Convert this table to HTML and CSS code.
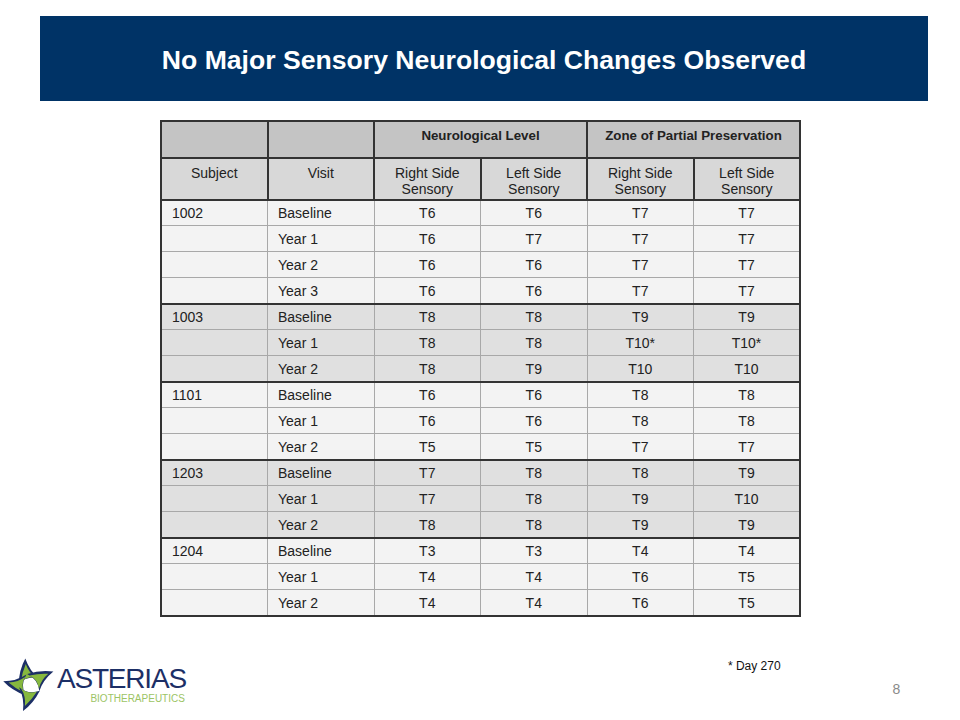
FILE: index.html
```html
<!DOCTYPE html>
<html>
<head>
<meta charset="utf-8">
<link rel="stylesheet" href="styles.css">
</head>
<body>
<div class="slide">
  <div class="banner"><h1 class="title">No Major Sensory Neurological Changes Observed</h1></div>
  <table class="grid">
    <colgroup><col><col><col><col><col><col></colgroup>
    <thead>
      <tr class="top">
        <th></th><th></th>
        <th colspan="2">Neurological Level</th>
        <th colspan="2">Zone of Partial Preservation</th>
      </tr>
      <tr class="sub">
        <th>Subject</th><th>Visit</th>
        <th>Right Side<br>Sensory</th><th>Left Side<br>Sensory</th>
        <th>Right Side<br>Sensory</th><th>Left Side<br>Sensory</th>
      </tr>
    </thead>
    <tbody class="ga">
      <tr class="start"><td class="l">1002</td><td class="l">Baseline</td><td>T6</td><td>T6</td><td>T7</td><td>T7</td></tr>
      <tr><td class="l"></td><td class="l">Year 1</td><td>T6</td><td>T7</td><td>T7</td><td>T7</td></tr>
      <tr><td class="l"></td><td class="l">Year 2</td><td>T6</td><td>T6</td><td>T7</td><td>T7</td></tr>
      <tr><td class="l"></td><td class="l">Year 3</td><td>T6</td><td>T6</td><td>T7</td><td>T7</td></tr>
    </tbody>
    <tbody class="gb">
      <tr class="start"><td class="l">1003</td><td class="l">Baseline</td><td>T8</td><td>T8</td><td>T9</td><td>T9</td></tr>
      <tr><td class="l"></td><td class="l">Year 1</td><td>T8</td><td>T8</td><td>T10*</td><td>T10*</td></tr>
      <tr><td class="l"></td><td class="l">Year 2</td><td>T8</td><td>T9</td><td>T10</td><td>T10</td></tr>
    </tbody>
    <tbody class="ga">
      <tr class="start"><td class="l">1101</td><td class="l">Baseline</td><td>T6</td><td>T6</td><td>T8</td><td>T8</td></tr>
      <tr><td class="l"></td><td class="l">Year 1</td><td>T6</td><td>T6</td><td>T8</td><td>T8</td></tr>
      <tr><td class="l"></td><td class="l">Year 2</td><td>T5</td><td>T5</td><td>T7</td><td>T7</td></tr>
    </tbody>
    <tbody class="gb">
      <tr class="start"><td class="l">1203</td><td class="l">Baseline</td><td>T7</td><td>T8</td><td>T8</td><td>T9</td></tr>
      <tr><td class="l"></td><td class="l">Year 1</td><td>T7</td><td>T8</td><td>T9</td><td>T10</td></tr>
      <tr><td class="l"></td><td class="l">Year 2</td><td>T8</td><td>T8</td><td>T9</td><td>T9</td></tr>
    </tbody>
    <tbody class="ga">
      <tr class="start"><td class="l">1204</td><td class="l">Baseline</td><td>T3</td><td>T3</td><td>T4</td><td>T4</td></tr>
      <tr><td class="l"></td><td class="l">Year 1</td><td>T4</td><td>T4</td><td>T6</td><td>T5</td></tr>
      <tr><td class="l"></td><td class="l">Year 2</td><td>T4</td><td>T4</td><td>T6</td><td>T5</td></tr>
    </tbody>
  </table>
  <div class="footer">
    <div class="logo">
      <svg class="star" width="56" height="56" viewBox="0 0 56 56">
        <g transform="translate(27,27)">
          <g transform="rotate(-10)">
            <path d="M-11,-3 Q-8,-17 0,-27 Q2,-14 10,-5 Q-1,-10 -11,-3 Z" fill="#1c2f66"/>
            <path d="M-8.5,-4.5 Q-5.5,-14 -0.5,-21.5 Q1,-12 7.5,-6 Q-1,-9.5 -8.5,-4.5 Z" fill="#86b83e"/>
          </g>
          <g transform="rotate(-82)">
            <path d="M-11,-3 Q-8,-17 0,-27 Q2,-14 10,-5 Q-1,-10 -11,-3 Z" fill="#1c2f66"/>
            <path d="M-8.5,-4.5 Q-5.5,-14 -0.5,-21.5 Q1,-12 7.5,-6 Q-1,-9.5 -8.5,-4.5 Z" fill="#86b83e"/>
          </g>
          <g transform="rotate(195)">
            <path d="M-11,-3 Q-8,-17 0,-27 Q2,-14 10,-5 Q-1,-10 -11,-3 Z" fill="#1c2f66"/>
            <path d="M-8.5,-4.5 Q-5.5,-14 -0.5,-21.5 Q1,-12 7.5,-6 Q-1,-9.5 -8.5,-4.5 Z" fill="#86b83e"/>
          </g>
          <g transform="rotate(60)">
            <path d="M-11,-3 Q-8,-17 0,-27 Q2,-14 10,-5 Q-1,-10 -11,-3 Z" fill="#1c2f66"/>
            <path d="M-8.5,-4.5 Q-5.5,-14 -0.5,-21.5 Q1,-12 7.5,-6 Q-1,-9.5 -8.5,-4.5 Z" fill="#86b83e"/>
          </g>
        </g>
      </svg>
      <div class="brand">
        <div class="name">ASTERIAS</div>
        <div class="tag">BIOTHERAPEUTICS</div>
      </div>
    </div>
    <div class="note">* Day 270</div>
    <div class="page">8</div>
  </div>
</div>
</body>
</html>
```
FILE: styles.css
```css
html, body {
  margin: 0;
  padding: 0;
  background: #ffffff;
}
.slide {
  width: 960px;
  height: 720px;
  padding-top: 16px;
  box-sizing: border-box;
  font-family: "Liberation Sans", Arial, sans-serif;
  overflow: hidden;
}
.banner {
  margin: 0 32px 0 40px;
  height: 85px;
  background: #003366;
  display: flex;
  align-items: center;
  justify-content: center;
}
.title {
  margin: 0;
  color: #ffffff;
  font-size: 26.6px;
  font-weight: bold;
  line-height: 1;
  padding-top: 3px;
}
.grid {
  margin: 19px 0 0 160px;
  width: 641px;
  table-layout: fixed;
  border-collapse: collapse;
  border: 2px solid #333333;
  font-size: 14px;
  color: #222222;
}
.grid th {
  border: 2px solid #333333;
  padding: 0;
  vertical-align: top;
}
.grid .top th {
  height: 37px;
  background: #c4c4c4;
  font-weight: bold;
  font-size: 13.3px;
  padding-top: 6px;
  box-sizing: border-box;
  line-height: 16px;
}
.grid .sub th {
  height: 42px;
  background: #d8d8d8;
  font-weight: normal;
  padding-top: 6px;
  box-sizing: border-box;
  line-height: 16px;
}
.grid td {
  height: 25px;
  padding: 0;
  border: 1px solid #a8a8a8;
  text-align: center;
  vertical-align: middle;
  line-height: 16px;
}
.grid td.l {
  text-align: left;
  padding-left: 10px;
}
.grid tr.start td {
  height: 24px;
  border-top: 2px solid #333333;
}
.ga td {
  background: #f3f3f3;
}
.gb td {
  background: #e0e0e0;
}
.footer {
  display: flex;
  align-items: flex-start;
}
.logo {
  display: flex;
  align-items: flex-start;
  margin: 41px 0 0 3px;
}
.star {
  display: block;
}
.brand {
  margin-left: -2px;
  padding-top: 8px;
  display: flex;
  flex-direction: column;
  align-items: flex-end;
}
.name {
  font-family: "Liberation Sans", Arial, sans-serif;
  font-size: 28px;
  line-height: 26px;
  color: #1c2f66;
  letter-spacing: -1.2px;
}
.tag {
  font-family: "Liberation Sans", Arial, sans-serif;
  font-size: 10px;
  line-height: 10px;
  color: #9cc464;
  margin-top: 2px;
  margin-right: 1px;
}
.note {
  margin: 42px 0 0 542px;
  font-size: 12px;
  line-height: 14px;
  color: #111111;
}
.page {
  margin: 64px 0 0 112px;
  font-size: 14px;
  line-height: 16px;
  color: #8a8a8a;
}
```
